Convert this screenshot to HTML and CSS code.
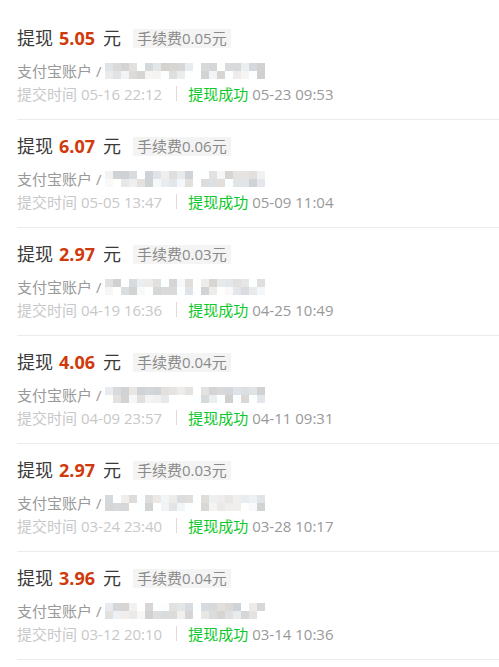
FILE: index.html
```html
<!DOCTYPE html>
<html lang="zh-CN">
<head>
    <meta charset="UTF-8">
    <meta name="viewport" content="width=device-width, initial-scale=1.0">
    <title>提现记录</title>
    <link rel="stylesheet" href="styles.css">
</head>
<body>

<ul class="records" id="records">
    <!-- records are rendered by app.js -->
</ul>

<script src="app.js"></script>
</body>
</html>
```

FILE: styles.css
```css
body {
    margin: 0;
    padding: 0;
    background-color: #ffffff;
    font-family: "Open Sans", "Noto Sans CJK SC", sans-serif;
    color: #333;
}
.records {
    list-style: none;
    margin: 0 0 0 17px;
    padding: 12px 0 0 0;
}
.record {
    padding: 14px 0 14px 0;
    border-bottom: 1px solid #ebebeb;
}
.record-title {
    display: flex;
    align-items: center;
    height: 24px;
    font-size: 18px;
    line-height: 24px;
    color: #3a3a3a;
}
.amount {
    color: #d03a0a;
    font-weight: bold;
    margin: 0 8px 0 6px;
}
.fee {
    margin-left: 12px;
    padding: 0 4px;
    height: 19px;
    line-height: 19px;
    font-size: 15px;
    color: #8a8a8a;
    background-color: #f4f4f4;
}
.account {
    display: flex;
    align-items: center;
    margin-top: 9px;
    height: 23px;
    font-size: 15px;
    color: #999;
}
.mosaic {
    display: grid;
    grid-template-columns: repeat(20, 8px);
    grid-auto-rows: 8px;
    margin-left: 4px;
}
.info {
    display: flex;
    align-items: center;
    height: 23px;
    font-size: 15px;
    color: #c8c8c8;
}
.sep {
    width: 1px;
    height: 15px;
    background-color: #e4d8d6;
    margin: 0 11px 0 14px;
}
.status {
    color: #0cc82a;
}
.done-time {
    color: #999;
    margin-left: 4px;
}
```

FILE: app.js
```js
const records = [
    { amount: "5.05", fee: "0.05", submit: "05-16 22:12", done: "05-23 09:53" },
    { amount: "6.07", fee: "0.06", submit: "05-05 13:47", done: "05-09 11:04" },
    { amount: "2.97", fee: "0.03", submit: "04-19 16:36", done: "04-25 10:49" },
    { amount: "4.06", fee: "0.04", submit: "04-09 23:57", done: "04-11 09:31" },
    { amount: "2.97", fee: "0.03", submit: "03-24 23:40", done: "03-28 10:17" },
    { amount: "3.96", fee: "0.04", submit: "03-12 20:10", done: "03-14 10:36" }
];

const listEl = document.getElementById("records");

// small seeded random so the blurred account looks the same every time
let seed = 7;
function rand() {
    seed = (seed * 9301 + 49297) % 233280;
    return seed / 233280;
}

function makeMosaic() {
    const mosaic = document.createElement("span");
    mosaic.classList.add("mosaic");
    for (let i = 0; i < 40; i++) {
        const cell = document.createElement("span");
        const col = i % 20;
        let shade = 208 + Math.floor(rand() * 42);
        if (col === 11 || rand() < 0.12) {
            shade = 255; // gap between the two parts
        }
        const tint = Math.floor(rand() * 8) - 4;
        const r = Math.min(255, shade + tint);
        const b = Math.min(255, shade - tint);
        cell.style.background = `rgb(${r}, ${shade}, ${b})`;
        mosaic.appendChild(cell);
    }
    return mosaic;
}

records.forEach(record => {
    const li = document.createElement("li");
    li.classList.add("record");
    li.innerHTML = `
        <div class="record-title">
            <span>提现</span>
            <span class="amount">${record.amount}</span>
            <span>元</span>
            <span class="fee">手续费${record.fee}元</span>
        </div>
        <div class="account"><span>支付宝账户 /</span></div>
        <div class="info">
            <span>提交时间 ${record.submit}</span>
            <span class="sep"></span>
            <span class="status">提现成功</span>
            <span class="done-time">${record.done}</span>
        </div>`;
    li.querySelector(".account").appendChild(makeMosaic());
    listEl.appendChild(li);
});
```
